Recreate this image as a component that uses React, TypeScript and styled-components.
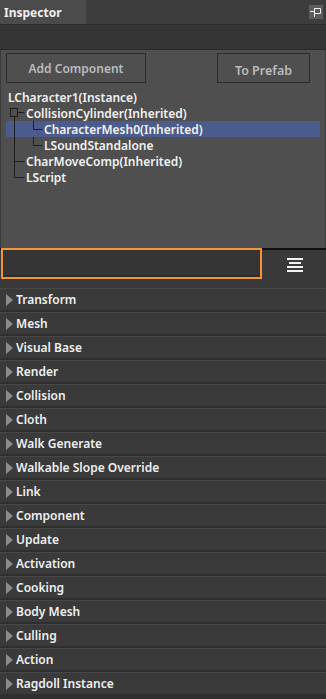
import React, { FC } from "react";
import styled, { createGlobalStyle } from "styled-components";

const GlobalStyle = createGlobalStyle`
  html, body {
    margin: 0;
    padding: 0;
    background: #2e2e2e;
  }
  body {
    font-family: "Noto Sans", "Open Sans", sans-serif;
    width: 326px;
    height: 699px;
    overflow: hidden;
  }
`;

// Styles
const Window = styled.div`
  display: flex;
  flex-direction: column;
  width: 326px;
  height: 699px;
  background: #2f2f2f;
`;

const TitleBar = styled.div`
  display: flex;
  align-items: stretch;
  justify-content: space-between;
  height: 24px;
  background: #3d3d3d;
  border-bottom: 1px solid #2a2a2a;
`;

const TitleTab = styled.div`
  display: flex;
  align-items: center;
  width: 86px;
  padding-left: 4px;
  box-sizing: border-box;
  background: #4b4b4b;
  color: #eef0f2;
  font-size: 12px;
  font-weight: 700;
`;

const PinButton = styled.div`
  display: flex;
  align-items: center;
  justify-content: center;
  width: 14px;
  height: 14px;
  margin: 5px 3px 0 0;
  background: #5c5c5c;
`;

const Toolbar = styled.div`
  height: 24px;
  background: #353535;
  border-bottom: 1px solid #2a2a2a;
`;

const TopPanel = styled.div`
  display: flex;
  flex-direction: column;
  height: 198px;
  background: #4f4f4f;
  border-left: 1px solid #3c3c3c;
  border-right: 1px solid #3c3c3c;
`;

const ButtonRow = styled.div`
  display: flex;
  justify-content: space-between;
  padding: 3px 15px 0 5px;
`;

const Button = styled.div<{ $width: number; $offset?: number; $size?: number }>`
  display: flex;
  align-items: center;
  justify-content: center;
  width: ${(p) => p.$width}px;
  height: 30px;
  box-sizing: border-box;
  padding-top: ${(p) => p.$offset ?? 0}px;
  border: 1px solid #2c2c2c;
  color: #b9bcbf;
  font-size: ${(p) => p.$size ?? 12}px;
  font-weight: 600;
`;

const Tree = styled.div`
  display: flex;
  flex-direction: column;
  padding: 6px 5px 0 5px;
`;

const TreeRow = styled.div<{ $indent: number; $selected?: boolean }>`
  position: relative;
  display: flex;
  align-items: center;
  height: 16px;
  padding-left: ${(p) => p.$indent}px;
  background: ${(p) => (p.$selected ? "#4b5c8c" : "transparent")};
  color: #f2f2f2;
  font-size: 12px;
  font-weight: 600;
  white-space: nowrap;
`;

const TreeLines = styled.svg`
  position: absolute;
  left: 0;
  top: 0;
  pointer-events: none;
`;

const SearchRow = styled.div`
  display: flex;
  align-items: flex-start;
  height: 38px;
  background: #393939;
  border-top: 2px solid #111111;
`;

const SearchBox = styled.div`
  width: 261px;
  height: 31px;
  margin: -2px 0 0 1px;
  box-sizing: border-box;
  border: 2px solid #f39435;
  background: #353535;
  box-shadow: inset 0 -2px 0 #2a2a2a;
`;

const FilterButton = styled.div`
  display: flex;
  flex: 1;
  align-items: center;
  justify-content: center;
  height: 29px;
  padding-left: 2px;
`;

const List = styled.div`
  display: flex;
  flex-direction: column;
  gap: 2px;
`;

const Category = styled.div`
  display: flex;
  align-items: center;
  gap: 3px;
  height: 22px;
  padding-left: 6px;
  background: #3a3a3a;
  border-top: 1px solid #474747;
  box-sizing: border-box;
  color: #eef0f2;
  font-size: 12px;
  font-weight: 600;
`;

const Arrow = styled.span`
  width: 0;
  height: 0;
  border-top: 6px solid transparent;
  border-bottom: 6px solid transparent;
  border-left: 7px solid #8c8c8c;
`;

const categories = [
  "Transform",
  "Mesh",
  "Visual Base",
  "Render",
  "Collision",
  "Cloth",
  "Walk Generate",
  "Walkable Slope Override",
  "Link",
  "Component",
  "Update",
  "Activation",
  "Cooking",
  "Body Mesh",
  "Culling",
  "Action",
  "Ragdoll Instance",
];

const LINE = "#1e1e1e";

const PinIcon: FC = () => (
  <svg width="12" height="12" viewBox="0 0 12 12">
    <path d="M4.5 2.5h6v5h-6z" fill="none" stroke="#f0f0f0" strokeWidth="1" />
    <path d="M0 5.5h4.5M4.5 2v9" stroke="#f0f0f0" strokeWidth="1" />
  </svg>
);

const FilterIcon: FC = () => (
  <svg width="18" height="16" viewBox="0 0 18 16">
    <rect x="1" y="1" width="16" height="2" fill="#f2f2f2" />
    <rect x="3" y="5" width="12" height="2" fill="#f2f2f2" />
    <rect x="1" y="9" width="16" height="2" fill="#f2f2f2" />
    <rect x="1" y="13" width="16" height="2" fill="#f2f2f2" />
  </svg>
);

const App: FC = () => {
  return (
    <>
      <GlobalStyle />
      <Window>
        <TitleBar>
          <TitleTab>Inspector</TitleTab>
          <PinButton>
            <PinIcon />
          </PinButton>
        </TitleBar>
        <Toolbar />
        <TopPanel>
          <ButtonRow>
            <Button $width={140}>Add Component</Button>
            <Button $width={93} $offset={4} $size={12.5}>
              To Prefab
            </Button>
          </ButtonRow>
          <Tree>
            <TreeRow $indent={2}>LCharacter1(Instance)</TreeRow>
            <TreeRow $indent={20}>
              <TreeLines width="30" height="16">
                <rect x="4.5" y="3.5" width="7" height="8" fill="none" stroke={LINE} />
                <path d="M11.5 7.5h7M8.5 11.5V16" stroke={LINE} fill="none" />
              </TreeLines>
              CollisionCylinder(Inherited)
            </TreeRow>
            <TreeRow $indent={38} $selected>
              <TreeLines width="40" height="16">
                <path d="M8.5 0v16M27.5 0v8.5h9" stroke={LINE} fill="none" />
              </TreeLines>
              CharacterMesh0(Inherited)
            </TreeRow>
            <TreeRow $indent={38}>
              <TreeLines width="40" height="16">
                <path d="M8.5 0v16M27.5 0v8.5h9" stroke={LINE} fill="none" />
              </TreeLines>
              LSoundStandalone
            </TreeRow>
            <TreeRow $indent={20}>
              <TreeLines width="30" height="16">
                <path d="M8.5 0v16M8.5 8.5h10" stroke={LINE} fill="none" />
              </TreeLines>
              CharMoveComp(Inherited)
            </TreeRow>
            <TreeRow $indent={20}>
              <TreeLines width="30" height="16">
                <path d="M8.5 0v8.5h10" stroke={LINE} fill="none" />
              </TreeLines>
              LScript
            </TreeRow>
          </Tree>
        </TopPanel>
        <SearchRow>
          <SearchBox />
          <FilterButton>
            <FilterIcon />
          </FilterButton>
        </SearchRow>
        <List>
          {categories.map((name) => (
            <Category key={name}>
              <Arrow />
              {name}
            </Category>
          ))}
        </List>
      </Window>
    </>
  );
};

export default App;
